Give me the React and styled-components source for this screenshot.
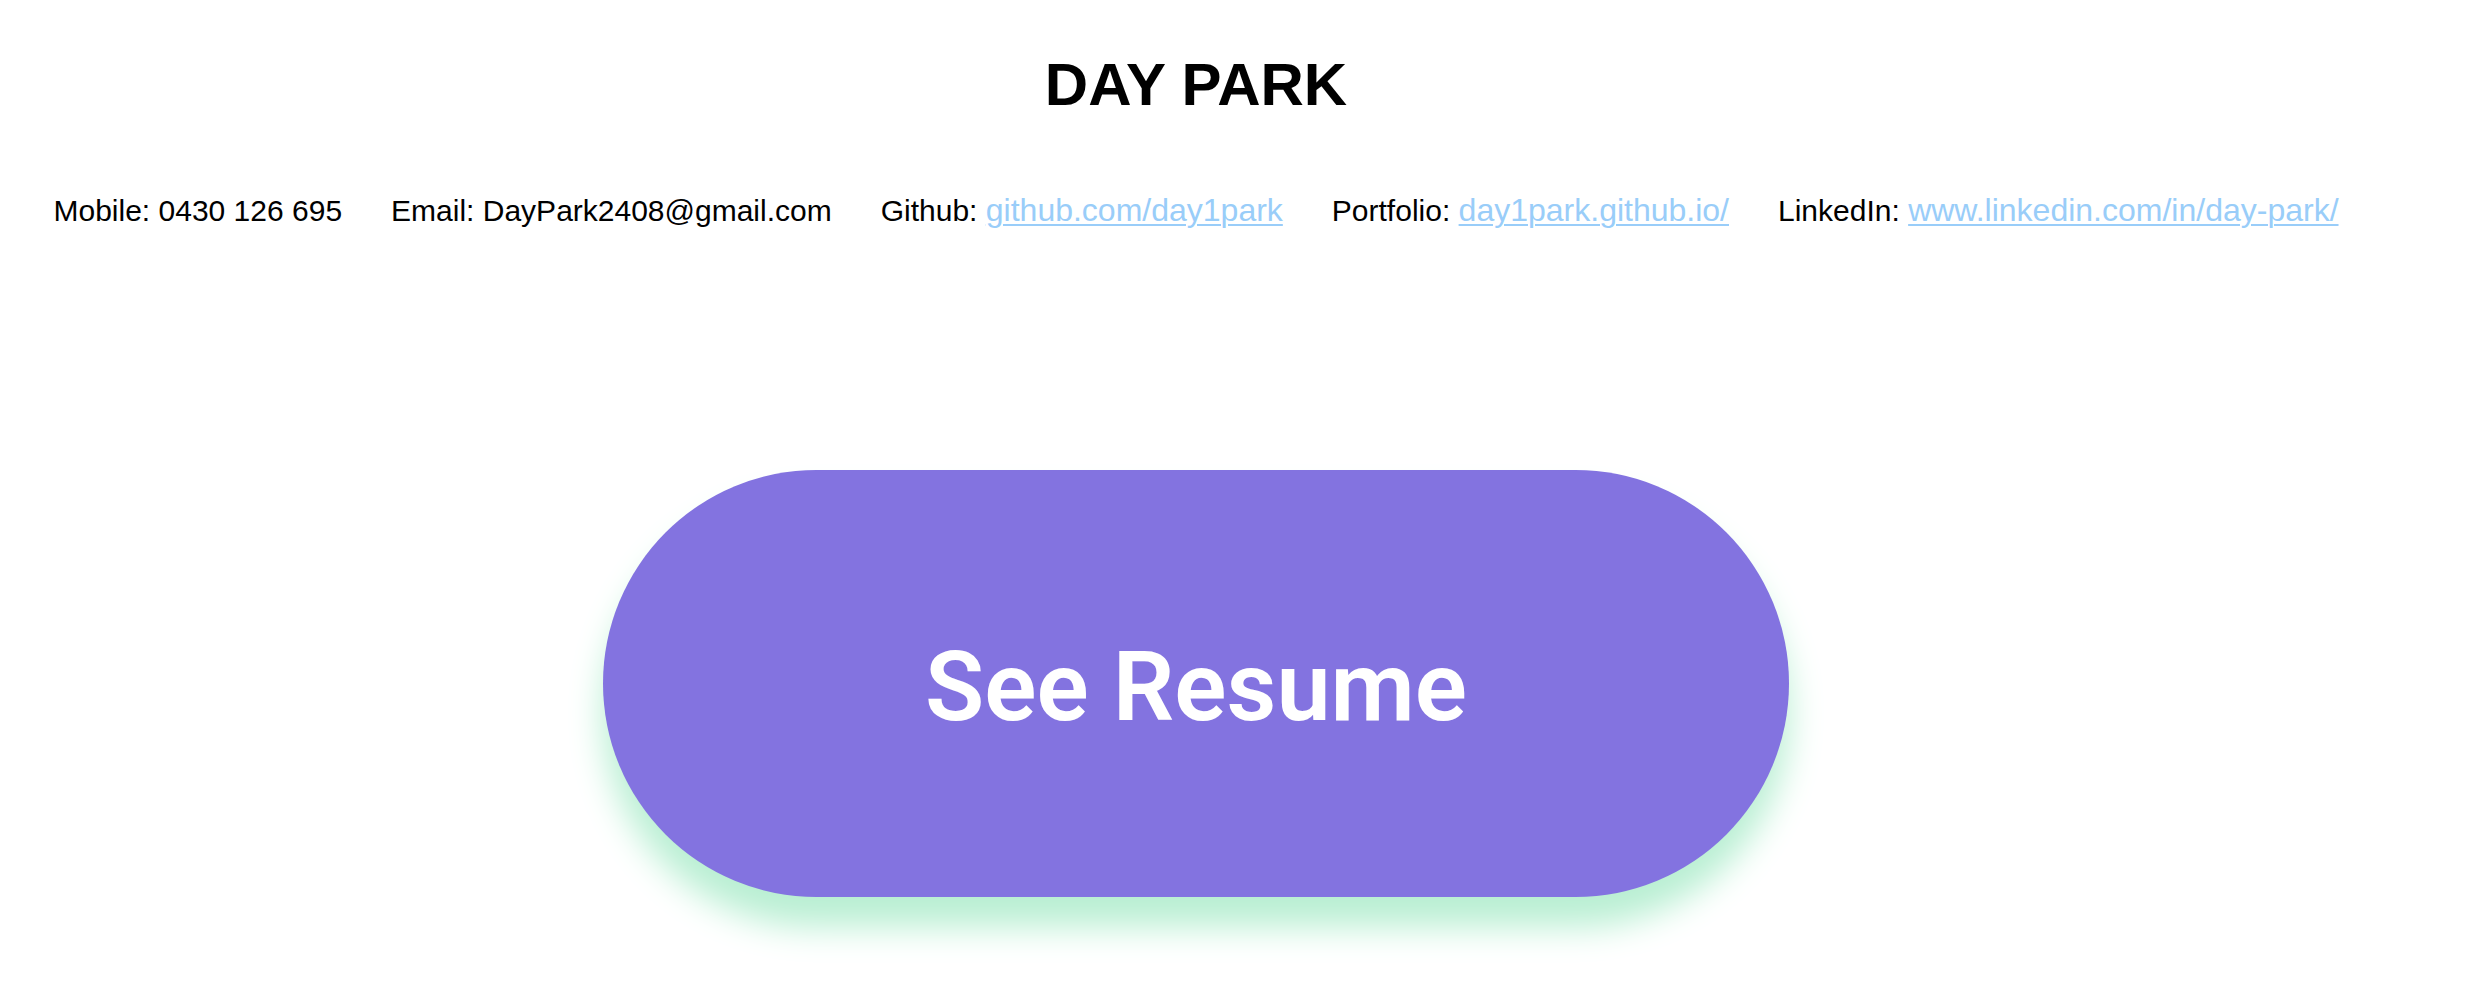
import React from 'react';
import styled, { createGlobalStyle } from 'styled-components';

const GlobalStyle = createGlobalStyle`
  html, body {
    margin: 0;
    padding: 0;
    background: #ffffff;
  }
  body {
    font-family: "Liberation Sans", Arial, sans-serif;
    color: #000;
  }
`;

const Page = styled.div`
  width: 2392px;
  min-height: 100vh;
  padding-bottom: 91px;
  box-sizing: border-box;
  display: flex;
  flex-direction: column;
  align-items: center;
`;

const Name = styled.h1`
  margin: 50px 0 0;
  font-family: "Liberation Sans", Arial, sans-serif;
  font-size: 60px;
  font-weight: 700;
  line-height: 1.15;
`;

const ContactRow = styled.div`
  display: flex;
  justify-content: center;
  align-items: baseline;
  gap: 49px;
  margin-top: 73px;
  font-size: 30px;
  line-height: 1.15;
`;

const ContactItem = styled.span`
  white-space: nowrap;
`;

const ContactLink = styled.a`
  color: #99cdf9;
  font-size: 32px;
  text-decoration: underline;
  text-underline-offset: 3px;
  text-decoration-thickness: 2px;
`;

const ResumeButton = styled.button`
  margin-top: 241px;
  width: 1186px;
  height: 427px;
  flex-shrink: 0;
  border: none;
  border-radius: 214px;
  padding: 8px 0 0;
  background: #8373e0;
  color: #ffffff;
  font-family: Roboto, "Liberation Sans", sans-serif;
  font-size: 97px;
  font-weight: 600;
  box-shadow: 0 30px 34px #b9efd3;
  cursor: pointer;
`;

const contacts = [
  { label: 'Mobile', value: '0430 126 695' },
  { label: 'Email', value: 'DayPark2408@gmail.com' },
  { label: 'Github', link: 'github.com/day1park' },
  { label: 'Portfolio', link: 'day1park.github.io/' },
  { label: 'LinkedIn', link: 'www.linkedin.com/in/day-park/' },
];

export default function App() {
  return (
    <>
      <GlobalStyle />
      <Page>
        <Name>DAY PARK</Name>
        <ContactRow>
          {contacts.map((c) => (
            <ContactItem key={c.label}>
              {c.label}:{' '}
              {c.link ? <ContactLink href="#">{c.link}</ContactLink> : c.value}
            </ContactItem>
          ))}
        </ContactRow>
        <ResumeButton>See Resume</ResumeButton>
      </Page>
    </>
  );
}
